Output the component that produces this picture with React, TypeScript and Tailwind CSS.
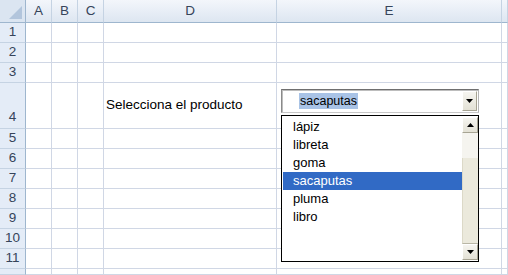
import React from 'react';

const cols = ['A', 'B', 'C', 'D', 'E', ''];
const rows = [1, 2, 3, 4, 5, 6, 7, 8, 9, 10, 11, 12];
const items = ['lápiz', 'libreta', 'goma', 'sacaputas', 'pluma', 'libro'];

function Arrow({ up }: { up?: boolean }) {
  return (
    <svg width="7" height="4" viewBox="0 0 7 4">
      <path d={up ? 'M0 4 L3.5 0 L7 4 Z' : 'M0 0 L7 0 L3.5 4 Z'} fill="#000" />
    </svg>
  );
}

function ScrollButton({ up }: { up?: boolean }) {
  return (
    <div className="h-[16px] flex items-center justify-center bg-gradient-to-b from-[#f6f5f0] to-[#e3e1d5] border border-t-white border-l-white border-r-[#a7a493] border-b-[#a7a493]">
      <Arrow up={up} />
    </div>
  );
}

export default function App() {
  return (
    <div className="relative w-[508px] h-[275px] overflow-hidden bg-white font-['Liberation_Sans',sans-serif]">
      <div className="grid grid-cols-[26px_26px_26px_26px_173px_225px_1fr] grid-rows-[23px_20px_20px_20px_46px_20px_20px_20px_20px_20px_20px_20px_1fr] h-full">
        {/* corner */}
        <div className="relative bg-[#dbe5f1] border-r border-b border-[#9eb6ce]">
          <div className="absolute right-[3px] bottom-[3px] w-0 h-0 border-l-[13px] border-l-transparent border-b-[13px] border-b-[#b2c5dc]" />
        </div>
        {cols.map((c, i) => (
          <div
            key={i}
            className="flex items-center justify-center bg-gradient-to-b from-[#f3f6fb] to-[#dde6f1] border-r border-b border-r-[#c5d3e3] border-b-[#9eb6ce] text-[13.5px] text-[#36445a]"
          >
            {c}
          </div>
        ))}
        {rows.map((r) => (
          <React.Fragment key={r}>
            <div
              className={`flex justify-center bg-[#e4ecf7] border-r border-b border-r-[#9eb6ce] border-b-[#c5d3e3] text-[13.5px] text-[#36445a] ${
                r === 4 ? 'items-end pb-[1px]' : 'items-center'
              }`}
            >
              {r < 12 ? r : ''}
            </div>
            {cols.map((c, i) => (
              <div key={i} className="border-r border-b border-[#d0d7e5] text-[13.5px] text-black">
                {r === 4 && c === 'D' ? (
                  <div className="pl-[2px] pt-[12px] whitespace-nowrap">Selecciona el producto</div>
                ) : null}
              </div>
            ))}
          </React.Fragment>
        ))}
      </div>

      {/* combo box */}
      <div className="absolute left-[281px] top-[89px] w-[198px] h-[24px] bg-white border border-t-[#6f6f6f] border-l-[#8a8a8a] border-r-[#b5b5b5] border-b-[#c8c8c8] shadow-[inset_1px_1px_0_#bdbdbd] flex items-center">
        <span className="ml-[17px] px-[1px] bg-[#a9c3e6] text-[12.5px] leading-[16px] text-black">sacaputas</span>
        <div className="ml-auto mr-[1px] w-[15px] h-[20px] flex items-center justify-center bg-gradient-to-b from-[#f6f5f0] to-[#e3e1d5] border border-t-white border-l-white border-r-[#a7a493] border-b-[#a7a493]">
          <Arrow />
        </div>
      </div>

      {/* list box */}
      <div className="absolute left-[281px] top-[115px] w-[198px] h-[147px] bg-white border border-black flex">
        <div className="flex-1 pt-[2px] pl-[1px]">
          {items.map((it) => (
            <div
              key={it}
              className={`h-[18px] pl-[10px] text-[13px] leading-[18px] ${
                it === 'sacaputas' ? 'bg-[#316ac5] text-white' : 'text-black'
              }`}
            >
              {it}
            </div>
          ))}
        </div>
        <div className="w-[16px] flex flex-col py-[1px]">
          <ScrollButton up />
          <div className="h-[25px] bg-[#f5f4ef]" />
          <div className="flex-1 bg-[#ebe9dc] border-l border-[#dcd9c8] border-b border-b-[#b9b6a5]" />
          <ScrollButton />
        </div>
      </div>
    </div>
  );
}
